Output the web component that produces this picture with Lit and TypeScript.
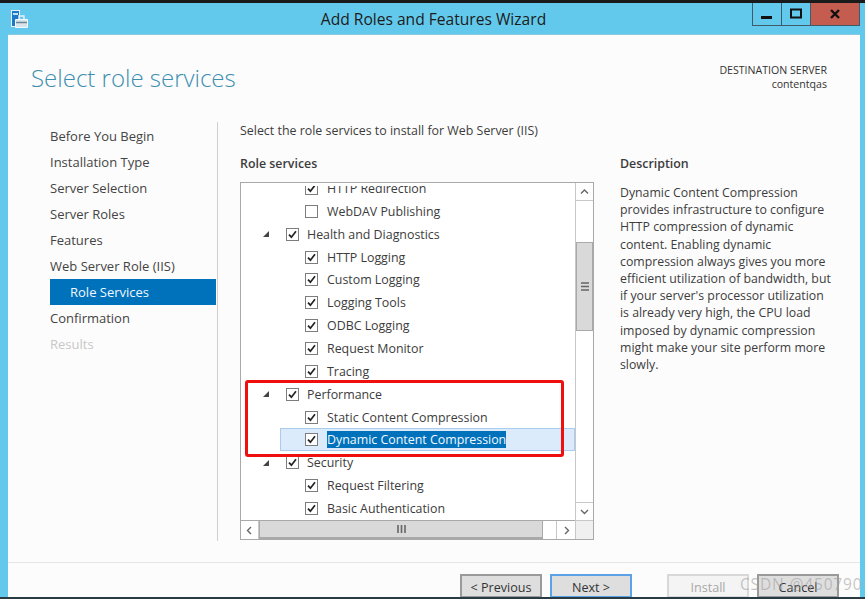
import { LitElement, html, css, svg } from "lit";
import { customElement } from "lit/decorators.js";

const steps = [
  ["Before You Begin", ""],
  ["Installation Type", ""],
  ["Server Selection", ""],
  ["Server Roles", ""],
  ["Features", ""],
  ["Web Server Role (IIS)", ""],
  ["Role Services", "active"],
  ["Confirmation", ""],
  ["Results", "disabled"],
];

type Row = { label: string; level: number; checked: boolean; selected?: boolean };
const rows: Row[] = [
  { label: "HTTP Redirection", level: 1, checked: true },
  { label: "WebDAV Publishing", level: 1, checked: false },
  { label: "Health and Diagnostics", level: 0, checked: true },
  { label: "HTTP Logging", level: 1, checked: true },
  { label: "Custom Logging", level: 1, checked: true },
  { label: "Logging Tools", level: 1, checked: true },
  { label: "ODBC Logging", level: 1, checked: true },
  { label: "Request Monitor", level: 1, checked: true },
  { label: "Tracing", level: 1, checked: true },
  { label: "Performance", level: 0, checked: true },
  { label: "Static Content Compression", level: 1, checked: true },
  { label: "Dynamic Content Compression", level: 1, checked: true, selected: true },
  { label: "Security", level: 0, checked: true },
  { label: "Request Filtering", level: 1, checked: true },
  { label: "Basic Authentication", level: 1, checked: true },
];

const check = svg`<svg class="tick" width="9" height="9" viewBox="0 0 9 9"><path d="M1 4.6 L3.4 7.2 L8 1.2" fill="none" stroke="#222" stroke-width="1.7"/></svg>`;
const chev = (d: string) => svg`<svg width="9" height="9" viewBox="0 0 9 9"><path d="${d}" fill="none" stroke="#666" stroke-width="1.4"/></svg>`;

@customElement("app-root")
export class AppRoot extends LitElement {
  static styles = css`
    :host { display: block; width: 865px; height: 599px; overflow: hidden; position: relative;
      font-family: "Open Sans", "Noto Sans", sans-serif; font-size: 12.6px; color: #3c3c3c; }
    .window { height: 599px; display: flex; flex-direction: column; background: #63c9ec; box-sizing: border-box; border-top: 3px solid #1a1a1a; }
    .titlebar { height: 31px; flex: none; display: flex; align-items: flex-start; padding-left: 10px; position: relative; }
    .appicon { margin-top: 7px; }
    .title { position: absolute; left: 0; width: 867px; top: 5px; text-align: center; font-size: 15.6px; line-height: 22px; color: #1c1c1c; }
    .controls { margin-left: auto; margin-right: 5px; display: flex; height: 23px; }
    .ctl { box-sizing: border-box; border: 1px solid #3f5a68; border-top: none; width: 30px; margin-left: -1px; display: flex; align-items: center; justify-content: center; }
    .ctl.close { width: 50px; background: #c45c50; }
    .panel { flex: 1; margin: 0 5px 0 8px; background: #fcfcfc; display: flex; flex-direction: column; min-height: 0; border-top: 1px solid #8cc8de; }
    .head { display: flex; justify-content: space-between; height: 87px; flex: none; box-sizing: border-box; padding: 27px 33px 0 23px; }
    h1 { margin: 0; font-weight: 300; font-size: 24px; line-height: 32px; color: #3c8fb0; }
    .dest { text-align: right; font-size: 10.6px; line-height: 14px; color: #333; padding-top: 1px; }
    .main { flex: 1; display: flex; min-height: 0; }
    nav { flex: none; margin-left: 42px; padding-top: 1px; border-right: 1px solid #cfcfcf; height: 419px; box-sizing: border-box; width: 168px; }
    .step { height: 26px; line-height: 26px; width: 166px; white-space: nowrap; color: #444; font-size: 13px; }
    .step.active { background: #0072bc; color: #f2f8fc; padding-left: 20px; box-sizing: border-box; }
    .step.disabled { color: #c8c8c8; }
    .content { margin-left: 22px; width: 353px; flex: none; }
    .intro { line-height: 18px; height: 31px; font-size: 12.42px; white-space: nowrap; }
    .label { font-weight: 600; line-height: 18px; height: 27px; padding-top: 1px; font-size: 12.4px; margin-top: 1px; }
    .box { width: 354px; height: 358px; box-sizing: border-box; border: 1px solid #a9a9a9; background: #fff; display: grid; grid-template-columns: 1fr 18px; grid-template-rows: 1fr 19px; }
    .tree { padding-top: 3px; min-height: 0; min-width: 0; display: flex; }
    .clip { overflow: hidden; flex: 1; min-width: 0; }
    .rows { margin-top: -9px; }
    .row { height: 22.87px; display: flex; align-items: center; box-sizing: border-box; font-size: 12.4px; white-space: nowrap; }
    .row.l0 { padding-left: 22px; }
    .row.l1 { padding-left: 64px; }
    .row.selected { margin-left: 39px; padding-left: 25px; background: #dcebfc; box-shadow: inset 0 0 0 1px #a9cdee; }
    .twist { width: 0; height: 0; border-style: solid; border-width: 0 0 6px 6px; border-color: transparent transparent #444 transparent; margin-right: 17px; }
    .cb { width: 13px; height: 13px; box-sizing: border-box; border: 1px solid #7d7d7d; background: #fff; flex: none; display: flex; align-items: center; justify-content: center; margin-right: 9px; }
    .row.l0 .cb { margin-right: 8px; }
    .sel { background: #0072bc; color: #f4f8fc; }
    .vbar { display: flex; flex-direction: column; border-left: 1px solid #c8c8c8; min-height: 0; }
    .arrow { height: 18px; flex: none; display: flex; align-items: center; justify-content: center; box-sizing: border-box; background: #fff; }
    .arrow.up { border-bottom: 1px solid #c8c8c8; }
    .arrow.down { border-top: 1px solid #c8c8c8; }
    .track { flex: 1; display: flex; flex-direction: column; padding-top: 41px; box-sizing: border-box; }
    .thumb { background: #d9d9d9; border: 1px solid #a9a9a9; box-sizing: border-box; display: flex; align-items: center; justify-content: center; }
    .thumb.v { height: 89px; }
    .grip { display: block; }
    .hbar { display: flex; border-top: 1px solid #a9a9a9; }
    .harrow { width: 18px; flex: none; display: flex; align-items: center; justify-content: center; box-sizing: border-box; }
    .harrow.left { border-right: 1px solid #c8c8c8; }
    .harrow.right { border-left: 1px solid #c8c8c8; width: 19px; }
    .htrack { flex: 1; padding-right: 13px; display: flex; }
    .thumb.h { flex: 1; border-top: none; border-bottom: 2px solid #a9a9a9; }
    .corner { background: #f0f0f0; border-left: 1px solid #c8c8c8; border-top: 1px solid #c8c8c8; }
    .desc { margin-left: 27px; width: 225px; flex: none; }
    .desc .label { height: 29px; }
    .desc p { margin: 0; line-height: 17.2px; font-size: 12.3px; color: #3c3c3c; }
    footer { height: 37px; flex: none; box-sizing: border-box; border-top: 1px solid #e6e6e6; display: flex; padding: 11px 0 0 452px; overflow: hidden; }
    .btn { width: 82px; height: 24px; box-sizing: border-box; background: #dedede; border: 2px solid #9a9a9a; text-align: center; line-height: 24px; font-size: 12.6px; color: #333; margin-right: 8px; flex: none; }
    .btn.next { border-color: #5ba3e6; margin-right: 35px; }
    .btn.off { background: #f4f4f4; border-color: #d8d8d8; color: #a8a8a8; }
    .rule { height: 2px; background: #2a3a42; flex: none; position: absolute; left: 0; right: 0; bottom: 0; }
    .mark { position: absolute; left: 740px; top: 574px; font-size: 15.5px; line-height: 20px; letter-spacing: 0.85px; color: rgba(160,160,160,.6); white-space: nowrap; }
    .redbox { position: absolute; left: 245px; top: 380px; width: 319px; height: 77px; box-sizing: border-box; border: 3px solid #f00f0f; border-radius: 3px; }
  `;

  render() {
    return html`
      <div class="window">
        <div class="titlebar">
          <svg class="appicon" width="18" height="19" viewBox="0 0 18 19">
            <rect x="1.5" y="0.5" width="8" height="16" fill="#1e78c8" stroke="#e8f4fb"/>
            <rect x="3" y="3" width="5" height="2" fill="#bfe4f8"/>
            <path d="M5.5 9.5 H17.5 V17.5 H5.5 Z" fill="#d8e4ea" stroke="#f4f8fa"/>
            <path d="M9 9 V6 H14 V9" fill="none" stroke="#e8f0f4" stroke-width="1.4"/>
            <path d="M6 12.5 H17" stroke="#6d8694" stroke-width="1.5"/>
          </svg>
          <div class="title">Add Roles and Features Wizard</div>
          <div class="controls">
            <div class="ctl"><svg width="12" height="12" viewBox="0 0 12 12"><rect x="0" y="8" width="11" height="3" fill="#111"/></svg></div>
            <div class="ctl"><svg width="12" height="12" viewBox="0 0 12 12"><rect x="1" y="1.5" width="10" height="8" fill="none" stroke="#111" stroke-width="2"/></svg></div>
            <div class="ctl close"><svg width="10" height="10" viewBox="0 0 10 10"><path d="M1 1 L9 9 M9 1 L1 9" stroke="#111" stroke-width="2.4"/></svg></div>
          </div>
        </div>
        <div class="panel">
          <div class="head">
            <h1>Select role services</h1>
            <div class="dest">DESTINATION SERVER<br />contentqas</div>
          </div>
          <div class="main">
            <nav>
              ${steps.map(([t, c]) => html`<div class="step ${c}">${t}</div>`)}
            </nav>
            <div class="content">
              <div class="intro">Select the role services to install for Web Server (IIS)</div>
              <div class="label">Role services</div>
              <div class="box">
                <div class="tree"><div class="clip">
                  <div class="rows">
                    ${rows.map((r) => html`
                      <div class="row l${r.level} ${r.selected ? "selected" : ""}">
                        ${r.level === 0 ? html`<span class="twist"></span>` : ""}
                        <span class="cb">${r.checked ? check : ""}</span>
                        <span class="${r.selected ? "sel" : ""}">${r.label}</span>
                      </div>`)}
                  </div>
                </div></div>
                <div class="vbar">
                  <div class="arrow up">${chev("M1 6.5 L4.5 3 L8 6.5")}</div>
                  <div class="track">
                    <div class="thumb v"><svg class="grip" width="8" height="9" viewBox="0 0 8 9"><path d="M0 1 H8 M0 4.5 H8 M0 8 H8" stroke="#666" stroke-width="1.6"/></svg></div>
                  </div>
                  <div class="arrow down">${chev("M1 3 L4.5 6.5 L8 3")}</div>
                </div>
                <div class="hbar">
                  <div class="harrow left">${chev("M6 1 L2.5 4.5 L6 8")}</div>
                  <div class="htrack">
                    <div class="thumb h"><svg class="grip" width="9" height="8" viewBox="0 0 9 8"><path d="M1 0 V8 M4.5 0 V8 M8 0 V8" stroke="#666" stroke-width="1.6"/></svg></div>
                  </div>
                  <div class="harrow right">${chev("M3 1 L6.5 4.5 L3 8")}</div>
                </div>
                <div class="corner"></div>
              </div>
            </div>
            <div class="desc">
              <div class="intro"></div>
              <div class="label">Description</div>
              <p>Dynamic Content Compression<br />provides infrastructure to configure<br />HTTP compression of dynamic<br />content. Enabling dynamic<br />compression always gives you more<br />efficient utilization of bandwidth, but<br />if your server's processor utilization<br />is already very high, the CPU load<br />imposed by dynamic compression<br />might make your site perform more<br />slowly.</p>
            </div>
          </div>
          <footer>
            <div class="btn">&lt; Previous</div>
            <div class="btn next">Next &gt;</div>
            <div class="btn off">Install</div>
            <div class="btn">Cancel</div>
          </footer>
        </div>
        <div class="rule"></div>
      </div>
      <div class="redbox"></div>
      <div class="mark">CSDN @450790</div>
    `;
  }
}
